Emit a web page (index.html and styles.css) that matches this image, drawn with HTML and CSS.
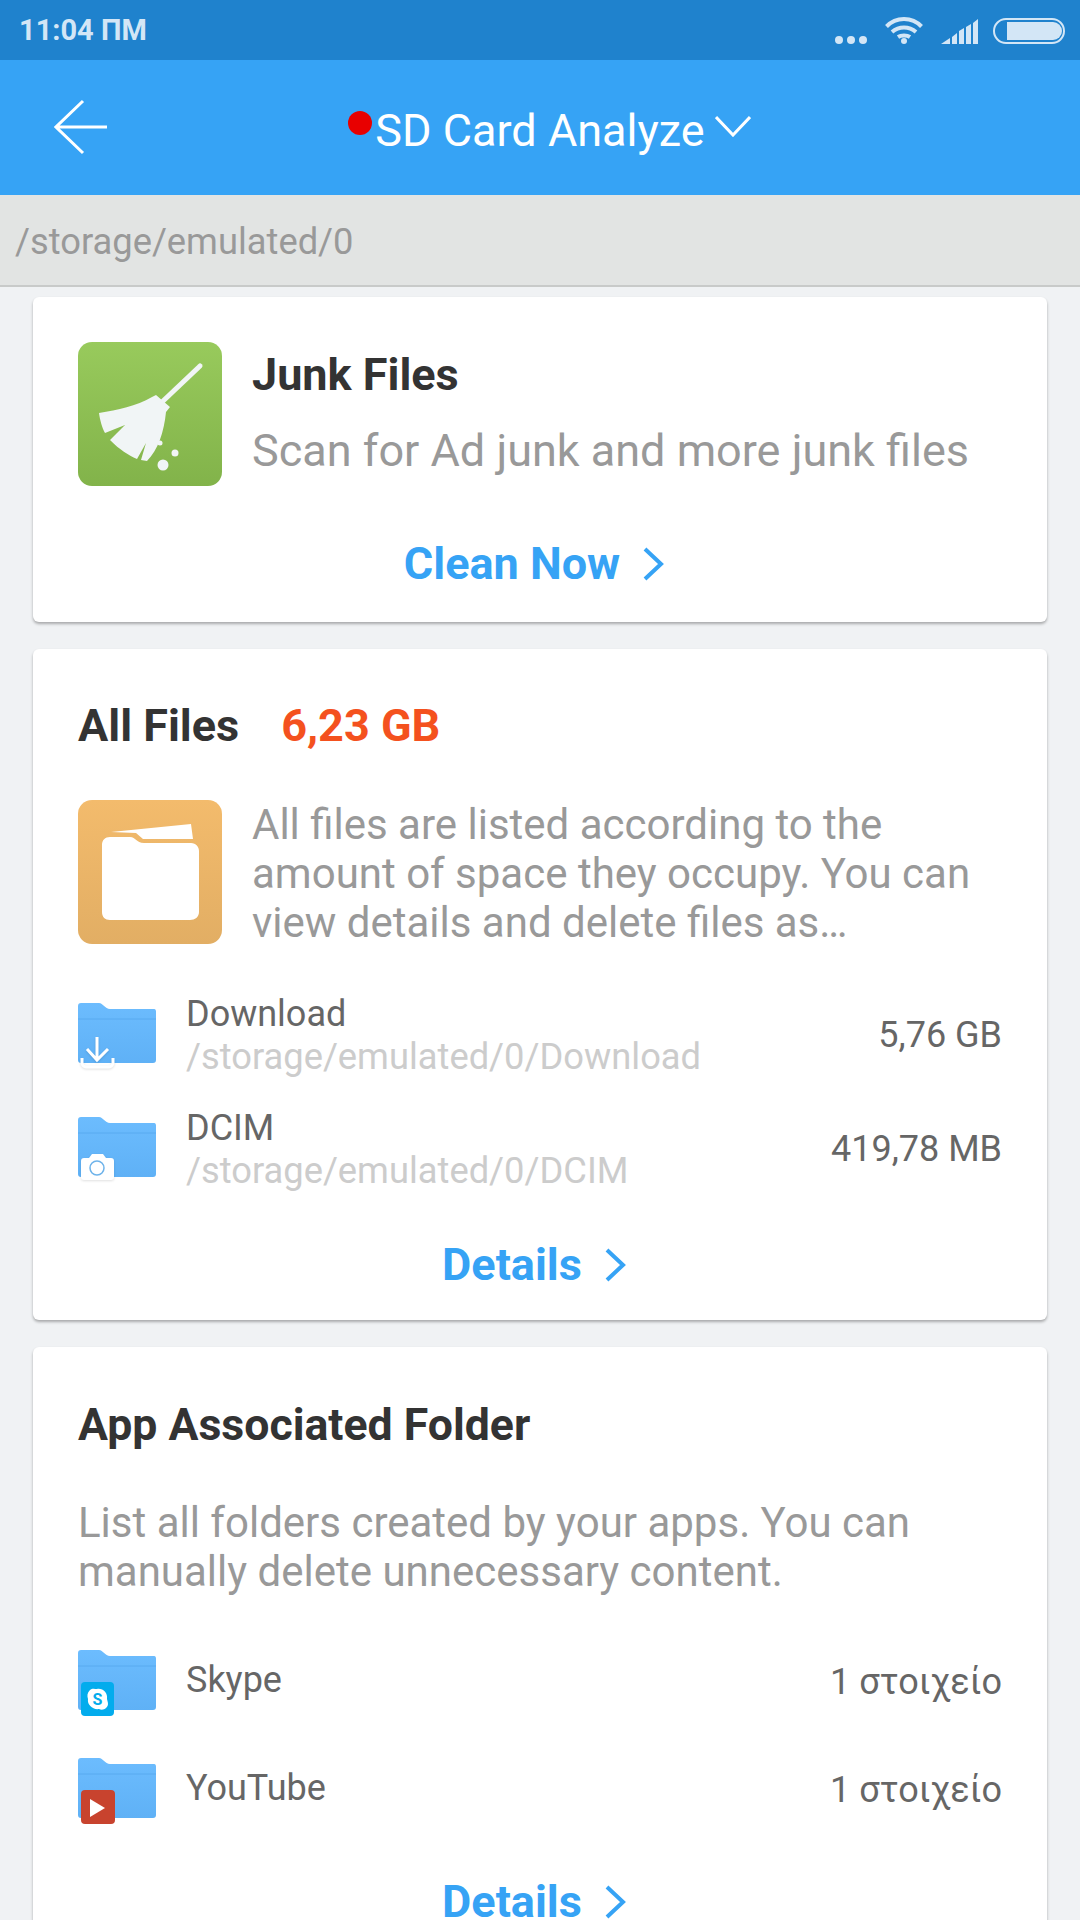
FILE: index.html
```html
<!DOCTYPE html>
<html lang="en">
<head>
    <meta charset="UTF-8">
    <meta name="viewport" content="width=device-width, initial-scale=1.0">
    <title>SD Card Analyze</title>
    <link rel="stylesheet" href="styles.css">
</head>
<body>
    <!-- Status bar -->
    <div class="status-bar">
        <span class="status-time">11:04 ПМ</span>
        <div class="status-icons">
            <svg class="icon-dots" width="32" height="8" viewBox="0 0 32 8"><circle cx="4" cy="4" r="4"/><circle cx="16" cy="4" r="4"/><circle cx="28" cy="4" r="4"/></svg>
            <svg class="icon-wifi" width="38" height="27" viewBox="0 0 38 27">
                <path d="M1.500 9.500C11 -0.500 27 -0.500 36.500 9.500" />
                <path d="M7 15C14 9 24 9 31 15" />
                <path d="M13 20C16 18 22 18 25 20" />
                <circle cx="19" cy="24" r="3" />
            </svg>
            <svg class="icon-signal" width="37" height="25" viewBox="0 0 37 25">
                <path d="M0 25L9 19V25Z"/>
                <path d="M11 18L16 14V25H11Z"/>
                <path d="M18 12L23 9V25H18Z"/>
                <path d="M25 8L30 5V25H25Z"/>
                <path d="M32 4L37 0V25H32Z"/>
            </svg>
            <div class="battery"><div class="battery-fill"></div></div>
        </div>
    </div>

    <!-- App bar -->
    <header class="app-bar">
        <svg class="back-icon" width="54" height="56" viewBox="0 0 54 56"><path d="M29 2L2 28L29 54M2 28H53"/></svg>
        <div class="app-title">
            <span class="title-text"><span class="red-dot"></span>SD Card Analyze</span>
            <svg class="title-arrow" width="36" height="22" viewBox="0 0 36 22"><path d="M1 2L18 20L35 2"/></svg>
        </div>
    </header>

    <div class="path-bar">/storage/emulated/0</div>

    <main class="content">
        <!-- Junk -->
        <section class="card card-junk">
            <div class="junk-row">
                <div class="big-icon big-icon-green">
                    <svg width="144" height="144" viewBox="0 0 144 144">
                        <path class="broom-stick" d="M84 60L122 24"/>
                        <path class="broom-head" d="M74 55L78 53L92 65L88 70C86 90 80 108 69 119L63 118L68 101L59 117C50 113 42 108 32 98L47 83L27 91C24 86 22 78 21 71C40 68 58 64 74 55Z"/>
                        <circle class="broom-head" cx="82" cy="101" r="2.500"/>
                        <circle class="broom-head" cx="97" cy="111" r="3.500"/>
                        <circle class="broom-head" cx="85" cy="123" r="5.500"/>
                    </svg>
                </div>
                <div class="junk-text">
                    <h2 class="card-title">Junk Files</h2>
                    <p class="desc">Scan for Ad junk and more junk files</p>
                </div>
            </div>
            <a class="card-link">Clean Now <svg class="chevron" width="22" height="34" viewBox="0 0 22 34"><path d="M3 2L19 17L3 32"/></svg></a>
        </section>

        <!-- All files -->
        <section class="card card-files">
            <div class="title-row">
                <h2 class="card-title">All Files</h2>
                <span class="total-size">6,23 GB</span>
            </div>
            <div class="info-row">
                <div class="big-icon big-icon-orange">
                    <svg width="144" height="144" viewBox="0 0 144 144">
                        <path fill="#fff" d="M33 32L113 24L115 39H65L58 33Z"/>
                        <path fill="#fff" d="M32 37H52C58 37 58 43 66 43H113C118 43 121 47 121 51V112C121 117 117 120 112 120H32C27 120 24 117 24 112V45C24 40 27 37 32 37Z"/>
                    </svg>
                </div>
                <p class="desc desc-small info-desc">All files are listed according to the amount of space they occupy. You can view details and delete files as…</p>
            </div>
            <div class="folder-list">
                <div class="folder-row">
                    <div class="folder">
                        <svg width="80" height="72" viewBox="0 0 80 72">
                            <defs>
                                <linearGradient id="folder-blue" x1="0" y1="0" x2="0" y2="1">
                                    <stop offset="0" stop-color="#6cbcfe"/>
                                    <stop offset="1" stop-color="#5fb1f6"/>
                                </linearGradient>
                            </defs>
                            <path class="folder-back" d="M0 3C0 1 1 0 3 0H21C25 0 27 6 32 6H76C78 6 78 8 78 9V57C78 59 77 60 75 60H3C1 60 0 59 0 57Z"/>
                            <path class="folder-line" d="M0 16H78"/>
                            <g class="badge-shadow">
                                <path class="dl-arrow" d="M19 34V57M9 46L19 57L30 46"/>
                                <path class="dl-tray" d="M4 55V60C4 62 6 64 8 64H31C33 64 35 62 35 60V55"/>
                            </g>
                        </svg>
                    </div>
                    <div class="folder-text">
                        <div class="folder-name">Download</div>
                        <div class="folder-path">/storage/emulated/0/Download</div>
                    </div>
                    <div class="folder-size">5,76 GB</div>
                </div>
                <div class="folder-row">
                    <div class="folder">
                        <svg width="80" height="72" viewBox="0 0 80 72">
                            <path class="folder-back" d="M0 3C0 1 1 0 3 0H21C25 0 27 6 32 6H76C78 6 78 8 78 9V57C78 59 77 60 75 60H3C1 60 0 59 0 57Z"/>
                            <path class="folder-line" d="M0 16H78"/>
                            <path class="badge-shadow" fill="#fff" d="M3 44C3 42 4 41 6 41H11L14 37H25L28 41H33C35 41 36 42 36 44V60C36 62 35 63 33 63H6C4 63 3 62 3 60Z"/>
                            <circle cx="19" cy="51" r="7" fill="none" stroke="#6eb3ea" stroke-width="1.500"/>
                        </svg>
                    </div>
                    <div class="folder-text">
                        <div class="folder-name">DCIM</div>
                        <div class="folder-path">/storage/emulated/0/DCIM</div>
                    </div>
                    <div class="folder-size">419,78 MB</div>
                </div>
            </div>
            <a class="card-link">Details <svg class="chevron" width="22" height="34" viewBox="0 0 22 34"><path d="M3 2L19 17L3 32"/></svg></a>
        </section>

        <!-- App folders -->
        <section class="card card-apps">
            <h2 class="card-title card-title-long">App Associated Folder</h2>
            <p class="desc desc-small apps-desc">List all folders created by your apps. You can manually delete unnecessary content.</p>
            <div class="app-list">
                <div class="app-row">
                    <div class="folder">
                        <svg width="80" height="72" viewBox="0 0 80 72">
                            <path class="folder-back" d="M0 3C0 1 1 0 3 0H21C25 0 27 6 32 6H76C78 6 78 8 78 9V57C78 59 77 60 75 60H3C1 60 0 59 0 57Z"/>
                            <path class="folder-line" d="M0 16H78"/>
                            <rect x="3" y="32" width="33" height="34" rx="4" fill="#03aced"/>
                            <path fill="#fff" d="M12 40C14 38 17 39 19 39C25 38 30 43 29 49C30 53 31 55 28 58C26 60 23 60 21 59C15 60 9 55 10 49C9 46 9 43 12 40Z"/>
                            <text x="19.500" y="54.500" class="skype-s">S</text>
                        </svg>
                    </div>
                    <div class="app-name">Skype</div>
                    <div class="folder-size">1 στοιχείο</div>
                </div>
                <div class="app-row">
                    <div class="folder">
                        <svg width="80" height="72" viewBox="0 0 80 72">
                            <path class="folder-back" d="M0 3C0 1 1 0 3 0H21C25 0 27 6 32 6H76C78 6 78 8 78 9V57C78 59 77 60 75 60H3C1 60 0 59 0 57Z"/>
                            <path class="folder-line" d="M0 16H78"/>
                            <rect x="3" y="32" width="34" height="34" rx="4" fill="#c8432e"/>
                            <path fill="#fff" d="M12 41L27 50L12 59Z"/>
                        </svg>
                    </div>
                    <div class="app-name">YouTube</div>
                    <div class="folder-size">1 στοιχείο</div>
                </div>
            </div>
            <a class="card-link">Details <svg class="chevron" width="22" height="34" viewBox="0 0 22 34"><path d="M3 2L19 17L3 32"/></svg></a>
        </section>
    </main>
</body>
</html>
```

FILE: styles.css
```css
html, body {
    margin: 0;
    height: 1920px;
    overflow: hidden;
}
body {
    font-family: Roboto, "Liberation Sans", sans-serif;
    background-color: #f0f2f4;
    color: #333;
}
.status-bar {
    height: 60px;
    background-color: #1f82cd;
    display: flex;
    align-items: center;
    justify-content: space-between;
    padding: 0 15px 0 19px;
}
.status-time {
    color: #d3e6f6;
    font-size: 29px;
    font-weight: 700;
}
.status-icons {
    display: flex;
    align-items: flex-end;
    fill: #d3e6f6;
    height: 26px;
    margin-top: 1px;
}
.icon-dots, .icon-wifi {
    margin-right: 18px;
}
.icon-signal {
    margin-right: 15px;
}
.icon-wifi path {
    fill: none;
    stroke: #d3e6f6;
    stroke-width: 4;
}
.battery {
    width: 72px;
    height: 26px;
    border: 2px solid #d3e6f6;
    border-radius: 14px;
    padding: 2px 1px 2px 0;
    box-sizing: border-box;
    display: flex;
    justify-content: flex-end;
}
.battery-fill {
    width: 55px;
    background-color: #d3e6f6;
    border-radius: 0 10px 10px 0;
}
.app-bar {
    height: 135px;
    background-color: #36a3f5;
    display: flex;
    align-items: center;
    justify-content: center;
    position: relative;
}
.back-icon {
    position: absolute;
    left: 54px;
    top: 39px;
}
.back-icon path {
    fill: none;
    stroke: #fff;
    stroke-width: 3;
}
.app-title {
    display: flex;
    align-items: center;
    color: #fff;
    font-size: 45px;
    padding-left: 46px;
}
.title-text {
    position: relative;
    padding-top: 6px;
}
.red-dot {
    position: absolute;
    left: -27px;
    top: 13px;
    width: 24px;
    height: 24px;
    border-radius: 50%;
    background-color: #e80000;
}
.title-arrow {
    margin: 0 0 4px 10px;
}
.title-arrow path {
    fill: none;
    stroke: #fff;
    stroke-width: 3;
}
.path-bar {
    height: 90px;
    line-height: 94px;
    background-color: #e2e4e3;
    border-bottom: 2px solid #c8cac9;
    color: #999;
    font-size: 36.300px;
    padding-left: 15px;
}
.content {
    padding: 10px 33px 0;
    display: flex;
    flex-direction: column;
    gap: 27px;
}
.card {
    background-color: #fff;
    border-radius: 6px;
    box-shadow: 0 2px 3px rgba(0, 0, 0, 0.3);
    padding: 0 45px;
}
.card-title {
    margin: 0;
    font-size: 45px;
    font-weight: 700;
    color: #333;
    line-height: 48px;
}
.card-title-long {
    font-size: 44.600px;
}
.desc {
    margin: 0;
    font-size: 45px;
    line-height: 49px;
    color: #999;
}
.desc-small {
    font-size: 42px;
}
.big-icon {
    width: 144px;
    height: 144px;
    border-radius: 14px;
    flex-shrink: 0;
}
.big-icon svg {
    display: block;
}
.big-icon-green {
    background: linear-gradient(#98ca5c, #82b34a);
}
.big-icon-orange {
    background: linear-gradient(#f3bb6c, #e2ae64);
}
.broom-stick {
    fill: none;
    stroke: #f1f5f6;
    stroke-width: 5;
    stroke-linecap: round;
}
.broom-head {
    fill: #f1f5f6;
}
.card-junk {
    height: 325px;
    box-sizing: border-box;
    padding-top: 45px;
}
.junk-row {
    display: flex;
    gap: 30px;
}
.junk-text .card-title {
    margin: 9px 0 27px;
}
.card-link {
    display: flex;
    align-items: center;
    justify-content: center;
    gap: 22px;
    color: #36a3f5;
    font-size: 45px;
    font-weight: 700;
    line-height: 53px;
    padding-right: 12px;
}
.card-junk .card-link {
    margin-top: 51px;
}
.chevron path {
    fill: none;
    stroke: #36a3f5;
    stroke-width: 4;
}
.card-files {
    height: 671px;
    box-sizing: border-box;
    padding-top: 50px;
}
.title-row {
    display: flex;
    gap: 42px;
    align-items: center;
}
.total-size {
    color: #f4511e;
    font-size: 45px;
    font-weight: 700;
}
.info-row {
    display: flex;
    gap: 30px;
    margin-top: 48px;
}
.info-desc {
    margin-top: 0;
}
.folder-list {
    margin-top: 35px;
}
.folder-row {
    display: flex;
    align-items: center;
    height: 114px;
}
.folder {
    width: 80px;
    height: 72px;
    flex-shrink: 0;
}
.folder svg {
    display: block;
}
.folder-back {
    fill: url(#folder-blue);
}
.folder-line {
    stroke: #59aaf0;
    stroke-width: 1;
    fill: none;
}
.dl-arrow, .dl-tray {
    fill: none;
    stroke: #fff;
    stroke-width: 3;
}
.badge-shadow {
    filter: drop-shadow(0 1px 1px rgba(0, 0, 0, 0.12));
}
.folder-text {
    flex: 1;
    margin: 0 0 8px 28px;
}
.folder-name, .app-name {
    font-size: 36px;
    color: #666;
    line-height: 43px;
}
.app-name {
    flex: 1;
    margin: 0 0 12px 28px;
}
.folder-path {
    font-size: 36.300px;
    color: #ccc;
    line-height: 41px;
}
.folder-size {
    font-size: 36px;
    color: #666;
    margin-bottom: 8px;
}
.card-files .card-link {
    margin-top: 28px;
}
.card-apps {
    padding-top: 54px;
    padding-bottom: 40px;
}
.apps-desc {
    margin-top: 49px;
}
.app-list {
    margin-top: 36px;
}
.app-row {
    display: flex;
    align-items: center;
    height: 108px;
}
.skype-s {
    font-size: 16px;
    font-weight: 700;
    fill: #03aced;
    text-anchor: middle;
}
.card-apps .card-link {
    margin-top: 27px;
}
```
